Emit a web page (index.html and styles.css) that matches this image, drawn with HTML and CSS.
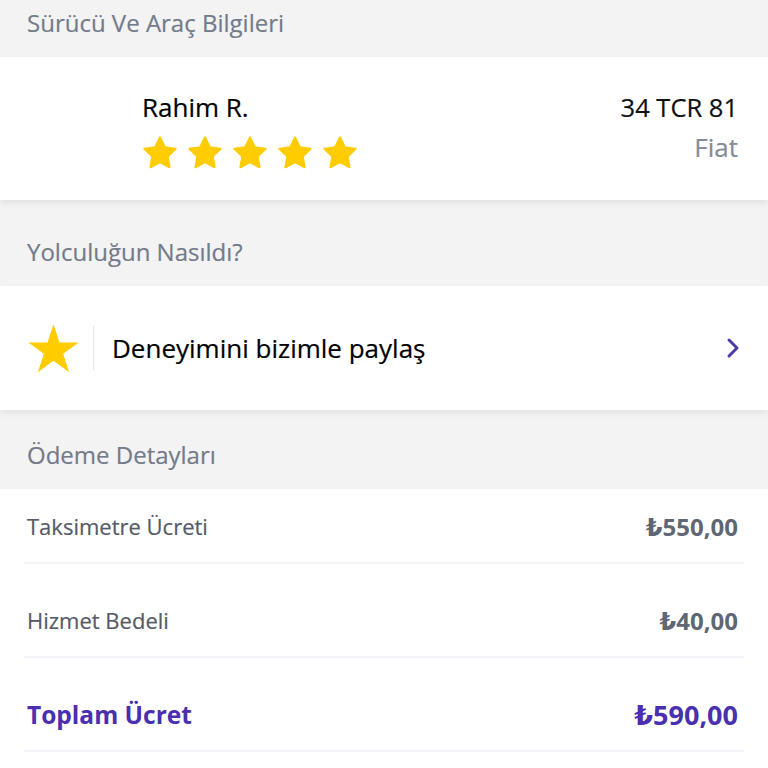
FILE: index.html
```html
<!DOCTYPE html>
<html lang="tr">
<head>
    <meta charset="UTF-8">
    <meta name="viewport" content="width=device-width, initial-scale=1.0">
    <title>Yolculuk Detayı</title>
    <link rel="stylesheet" href="styles.css">
</head>
<body>
    <svg width="0" height="0" class="defs">
        <defs>
            <path id="star" d="M12 1.6l3.2 6.6 7.2 1-5.3 5.1 1.3 7.2L12 18.1l-6.4 3.4 1.3-7.2-5.3-5.1 7.2-1z"/>
        </defs>
    </svg>

    <div class="section-title first">Sürücü Ve Araç Bilgileri</div>
    <div class="card driver">
        <div class="driver-info">
            <div class="driver-name">Rahim R.</div>
            <div class="stars">
                <svg viewBox="0 0 24 24"><use href="#star"/></svg>
                <svg viewBox="0 0 24 24"><use href="#star"/></svg>
                <svg viewBox="0 0 24 24"><use href="#star"/></svg>
                <svg viewBox="0 0 24 24"><use href="#star"/></svg>
                <svg viewBox="0 0 24 24"><use href="#star"/></svg>
            </div>
        </div>
        <div class="car-info">
            <div class="plate">34 TCR 81</div>
            <div class="brand">Fiat</div>
        </div>
    </div>

    <div class="section-title second">Yolculuğun Nasıldı?</div>
    <a class="card rate" href="#">
        <svg class="rate-star" viewBox="0 0 24 24"><path d="M12 1l2.7 8.28 8.71.01-7.04 5.13 2.68 8.29L12 17.6l-7.05 5.11 2.68-8.29-7.04-5.13 8.71-.01z"/></svg>
        <span class="rate-divider"></span>
        <span class="rate-text">Deneyimini bizimle paylaş</span>
        <svg class="chevron" viewBox="0 0 14 22"><path d="M3 3l8 8-8 8"/></svg>
    </a>

    <div class="section-title third">Ödeme Detayları</div>
    <div class="payment">
        <div class="pay-row">
            <span class="pay-label">Taksimetre Ücreti</span>
            <span class="pay-value">₺550,00</span>
        </div>
        <div class="pay-row">
            <span class="pay-label">Hizmet Bedeli</span>
            <span class="pay-value">₺40,00</span>
        </div>
        <div class="pay-row total">
            <span class="pay-label">Toplam Ücret</span>
            <span class="pay-value">₺590,00</span>
        </div>
    </div>
</body>
</html>
```

FILE: styles.css
```css
body {
    margin: 0;
    padding: 0;
    background-color: #f3f3f4;
    font-family: 'Open Sans', 'DejaVu Sans', sans-serif;
    color: #111;
}

.defs {
    position: absolute;
}

.section-title {
    padding: 0 27px 19px;
    font-size: 24px;
    line-height: 30px;
    color: #747b8a;
    -webkit-text-stroke: 0.2px #747b8a;
}

.section-title.first {
    padding-top: 8px;
}

.section-title.second {
    padding-top: 37px;
}

.section-title.third {
    padding-top: 30px;
}

.card {
    background-color: #fff;
    box-shadow: 0 3px 6px rgba(0, 0, 0, 0.07);
}

/* Sürücü kartı */
.driver {
    display: flex;
    justify-content: space-between;
    height: 143px;
    padding: 0 30px 0 142px;
    box-sizing: border-box;
}

.driver-info {
    padding-top: 34px;
}

.driver-name {
    font-size: 26px;
    line-height: 32px;
    color: #000;
    -webkit-text-stroke: 0.2px #000;
}

.stars {
    display: flex;
    gap: 9px;
    margin-top: 12px;
}

.stars svg {
    width: 36px;
    height: 36px;
    fill: #ffcc00;
    stroke: #ffcc00;
    stroke-width: 1.4;
    stroke-linejoin: round;
}

.car-info {
    padding-top: 34px;
    text-align: right;
}

.plate {
    font-size: 25.5px;
    line-height: 32px;
    color: #111;
    -webkit-text-stroke: 0.2px #111;
}

.brand {
    font-size: 26px;
    line-height: 32px;
    margin-top: 8px;
    color: #858b97;
    -webkit-text-stroke: 0.2px #858b97;
}

/* Değerlendirme */
.rate {
    display: flex;
    align-items: center;
    height: 124px;
    padding: 0 28px 0 27px;
    box-sizing: border-box;
    text-decoration: none;
    color: #000;
}

.rate-star {
    width: 53px;
    height: 53px;
    fill: #ffcc00;
}

.rate-divider {
    width: 1px;
    height: 44px;
    background-color: #e3e4ec;
    margin: 0 18px 0 13px;
}

.rate-text {
    flex: 1;
    font-size: 26px;
    -webkit-text-stroke: 0.2px #000;
}

.chevron {
    width: 14px;
    height: 22px;
    fill: none;
    stroke: #4b3aa8;
    stroke-width: 3;
    stroke-linecap: round;
    stroke-linejoin: round;
}

/* Ödeme */
.payment {
    background-color: #fff;
    padding: 0 24px 17px;
    min-height: 300px;
}

.pay-row {
    display: flex;
    justify-content: space-between;
    align-items: center;
    height: 94px;
    padding: 20px 6px 0 3px;
    box-sizing: border-box;
    border-bottom: 2px solid #f4f4f8;
}

.pay-row:first-child {
    height: 75px;
    padding-top: 1px;
}

.pay-label {
    font-size: 22px;
    color: #555b68;
    -webkit-text-stroke: 0.2px #555b68;
}

.pay-value {
    font-size: 24px;
    font-weight: 700;
    color: #5f6674;
}

.total .pay-label {
    font-size: 24.5px;
    font-weight: 700;
    color: #4a2fb0;
    -webkit-text-stroke: 0;
}

.total .pay-value {
    font-size: 27px;
    color: #4a2fb0;
}
```
